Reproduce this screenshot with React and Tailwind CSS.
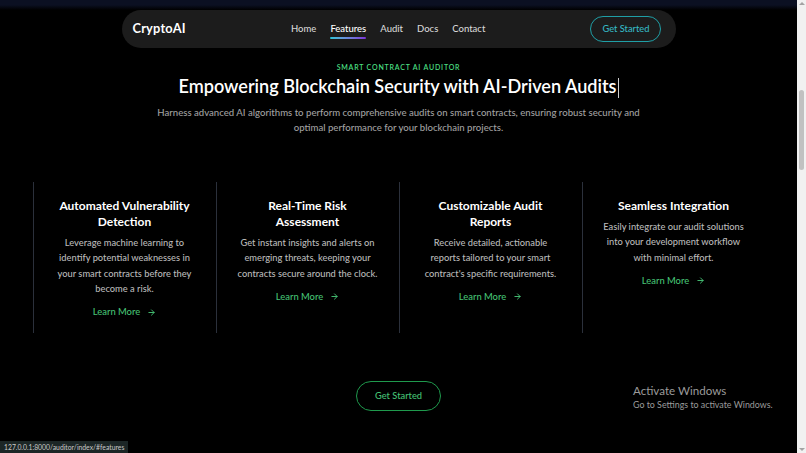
import React from 'react';
import { ArrowRight } from 'lucide-react';

const features = [
  {
    title: ['Automated Vulnerability', 'Detection'],
    desc: ['Leverage machine learning to', 'identify potential weaknesses in', 'your smart contracts before they', 'become a risk.'],
  },
  {
    title: ['Real-Time Risk', 'Assessment'],
    desc: ['Get instant insights and alerts on', 'emerging threats, keeping your', 'contracts secure around the clock.'],
  },
  {
    title: ['Customizable Audit', 'Reports'],
    desc: ['Receive detailed, actionable', 'reports tailored to your smart', "contract's specific requirements."],
  },
  {
    title: ['Seamless Integration'],
    desc: ['Easily integrate our audit solutions', 'into your development workflow', 'with minimal effort.'],
  },
];

const FeatureCard = ({ title, desc }) => (
  <div className="border-l border-[#2b303b] px-4 pt-4 pb-[14px] flex flex-col items-center text-center">
    <h3 className="text-[12px] leading-[16px] font-bold text-white whitespace-nowrap">
      {title.map((l) => <div key={l}>{l}</div>)}
    </h3>
    <p className="mt-[5px] text-[9.3px] leading-[15.3px] font-medium text-[#bababa] whitespace-nowrap">
      {desc.map((l) => <span key={l} className="block">{l}</span>)}
    </p>
    <a href="#" className="mt-[9px] flex items-center gap-[7px] text-[9.4px] leading-[14px] font-medium text-[#45c274]">
      Learn More <ArrowRight size={9} strokeWidth={2.5} />
    </a>
  </div>
);

export default function App() {
  return (
    <div className="flex h-[453px] w-[806px] overflow-hidden bg-black" style={{ fontFamily: 'Lato, "Open Sans", sans-serif' }}>
      <div className="relative flex-1 flex flex-col bg-[linear-gradient(to_bottom,#0b1022_0px,#0b1022_5px,#000_10px)]">
        {/* Nav */}
        <nav className="mx-auto mt-[10px] w-[554px] h-[38px] rounded-full bg-[#1c1c1c] flex items-center justify-between pl-[11px] pr-[14px]">
          <span className="text-[12.8px] font-bold text-white tracking-[0.2px]">CryptoAI</span>
          <div className="flex items-center gap-[14px] text-[9.5px] font-medium text-[#d6d6d6]">
            <a href="#">Home</a>
            <a href="#" className="relative text-white">
              Features
              <span className="absolute left-0 right-0 -bottom-[3px] h-[2px] rounded-full bg-gradient-to-r from-[#22c5d8] to-[#7b2fd6]" />
            </a>
            <a href="#">Audit</a>
            <a href="#">Docs</a>
            <a href="#">Contact</a>
          </div>
          <button className="h-[26px] w-[71px] rounded-full border border-[#1f9fa6] text-[9.3px] font-medium text-[#35b8c4]">Get Started</button>
        </nav>

        {/* Hero */}
        <div className="mt-[14px] flex flex-col items-center text-center">
          <p className="text-[7px] leading-[10px] font-semibold tracking-[0.8px] text-[#4ade80]">SMART CONTRACT AI AUDITOR</p>
          <h1 className="mt-[1px] text-[18.1px] leading-[26px] font-semibold text-white whitespace-nowrap">
            Empowering Blockchain Security with AI-Driven Audits
            <span className="inline-block w-px h-[20px] bg-[#cfcfcf] align-middle ml-px" />
          </h1>
          <p className="mt-[6px] text-[9.6px] leading-[15px] font-medium text-[#a0a0a0] whitespace-nowrap">
            Harness advanced AI algorithms to perform comprehensive audits on smart contracts, ensuring robust security and
            <br />
            optimal performance for your blockchain projects.
          </p>
        </div>

        {/* Features */}
        <div className="mt-[47px] mx-auto w-[732px] grid grid-cols-4">
          {features.map((f) => <FeatureCard key={f.title[0]} {...f} />)}
        </div>

        <div className="mt-[48px] flex justify-center">
          <button className="h-[30px] w-[85px] rounded-full border border-[#1f9a4d] text-[9.3px] font-medium text-[#45c274]">Get Started</button>
        </div>

        {/* Windows watermark */}
        <div className="absolute left-[633px] top-[383px] text-[#9b9b9b] pointer-events-none">
          <p className="text-[11.6px] leading-[15px]">Activate Windows</p>
          <p className="text-[8.85px] leading-[13px]">Go to Settings to activate Windows.</p>
        </div>

        {/* Status bar */}
        <div className="absolute left-0 bottom-0 h-[12px] w-[128px] pl-[4px] bg-[#1c2626] text-[6.8px] leading-[12px] text-[#c8c8c8] whitespace-nowrap">
          127.0.0.1:8000/auditor/index/#features
        </div>
      </div>

      {/* Scrollbar */}
      <div className="w-[9px] bg-[#f1f1f1] flex flex-col items-center">
        <div className="mt-[2px] w-0 h-0 border-x-[3px] border-x-transparent border-b-[3px] border-b-[#a3a3a3]" />
        <div className="mt-[85px] w-[5px] h-[80px] rounded-full bg-[#c1c1c1]" />
        <div className="flex-1" />
        <div className="mb-[2px] w-0 h-0 border-x-[3px] border-x-transparent border-t-[3px] border-t-[#a3a3a3]" />
      </div>
    </div>
  );
}
